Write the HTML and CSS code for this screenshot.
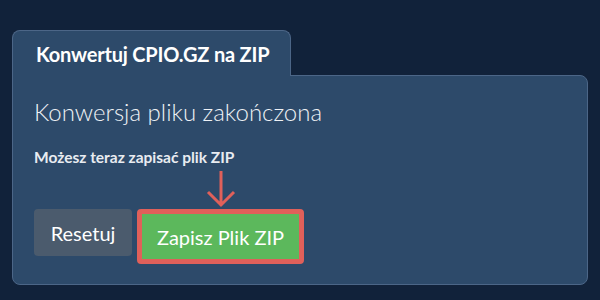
FILE: index.html
```html
<!DOCTYPE html>
<html lang="pl">
<head>
    <meta charset="UTF-8">
    <title>Konwertuj CPIO.GZ na ZIP</title>
    <link rel="stylesheet" href="styles.css">
</head>
<body>
<div class="converter">
    <div class="tabs">
        <div class="tab">Konwertuj CPIO.GZ na ZIP</div>
    </div>
    <div class="panel">
        <h2 class="status">Konwersja pliku zakończona</h2>
        <p class="hint">Możesz teraz zapisać plik ZIP</p>
        <div class="actions">
            <button class="btn btn-reset">Resetuj</button>
            <div class="save-wrap">
                <svg class="arrow" width="32" height="40" viewBox="0 0 32 40">
                    <path d="M16 2 V36 M3 23 L16 36 L29 23" fill="none" stroke="#e0605a" stroke-width="3"/>
                </svg>
                <button class="btn btn-save">Zapisz Plik ZIP</button>
            </div>
        </div>
    </div>
</div>
</body>
</html>
```

FILE: styles.css
```css
html,body{
    margin:0;
    height:100%;
    background-color:#11223a;
}
body{
    font-family:Lato,"Noto Sans",sans-serif;
    color:#fff;
}
.converter{
    padding:30px 12px 0 12px;
}
.tabs{
    display:flex;
}
.tab{
    position:relative;
    z-index:1;
    width:279px;
    height:46px;
    box-sizing:border-box;
    padding:11px 0 0 23px;
    margin-bottom:-1px;
    background:#2d4a6a;
    border:1px solid #4c6687;
    border-bottom:none;
    border-radius:8px 8px 0 0;
    font-size:20px;
    font-weight:bold;
    letter-spacing:-0.2px;
}
.panel{
    height:210px;
    box-sizing:border-box;
    background:#2d4a6a;
    border:1px solid #4c6687;
    border-radius:0 8px 8px 8px;
    padding:21px 21px 0 21px;
}
.status{
    margin:0;
    font-size:24px;
    font-weight:300;
    color:#eef1f5;
    line-height:30px;
}
.hint{
    margin:21px 0 0 0;
    font-size:15.5px;
    font-weight:bold;
    color:#e8ecf1;
}
.actions{
    display:flex;
    align-items:flex-start;
    gap:5px;
    margin-top:3px;
}
.save-wrap{
    display:flex;
    flex-direction:column;
    align-items:center;
}
.arrow{
    display:block;
}
.btn{
    font-family:Lato,"Noto Sans",sans-serif;
    font-size:20px;
    color:#fff;
    border:none;
    cursor:pointer;
}
.btn-reset{
    margin-top:40px;
    width:98px;
    height:47px;
    border-radius:4px;
    background:#4b5b6d;
}
.btn-save{
    width:167px;
    height:55px;
    border:5px solid #e0605a;
    border-radius:4px;
    background:#5cb85c;
    padding:0;
}
```
